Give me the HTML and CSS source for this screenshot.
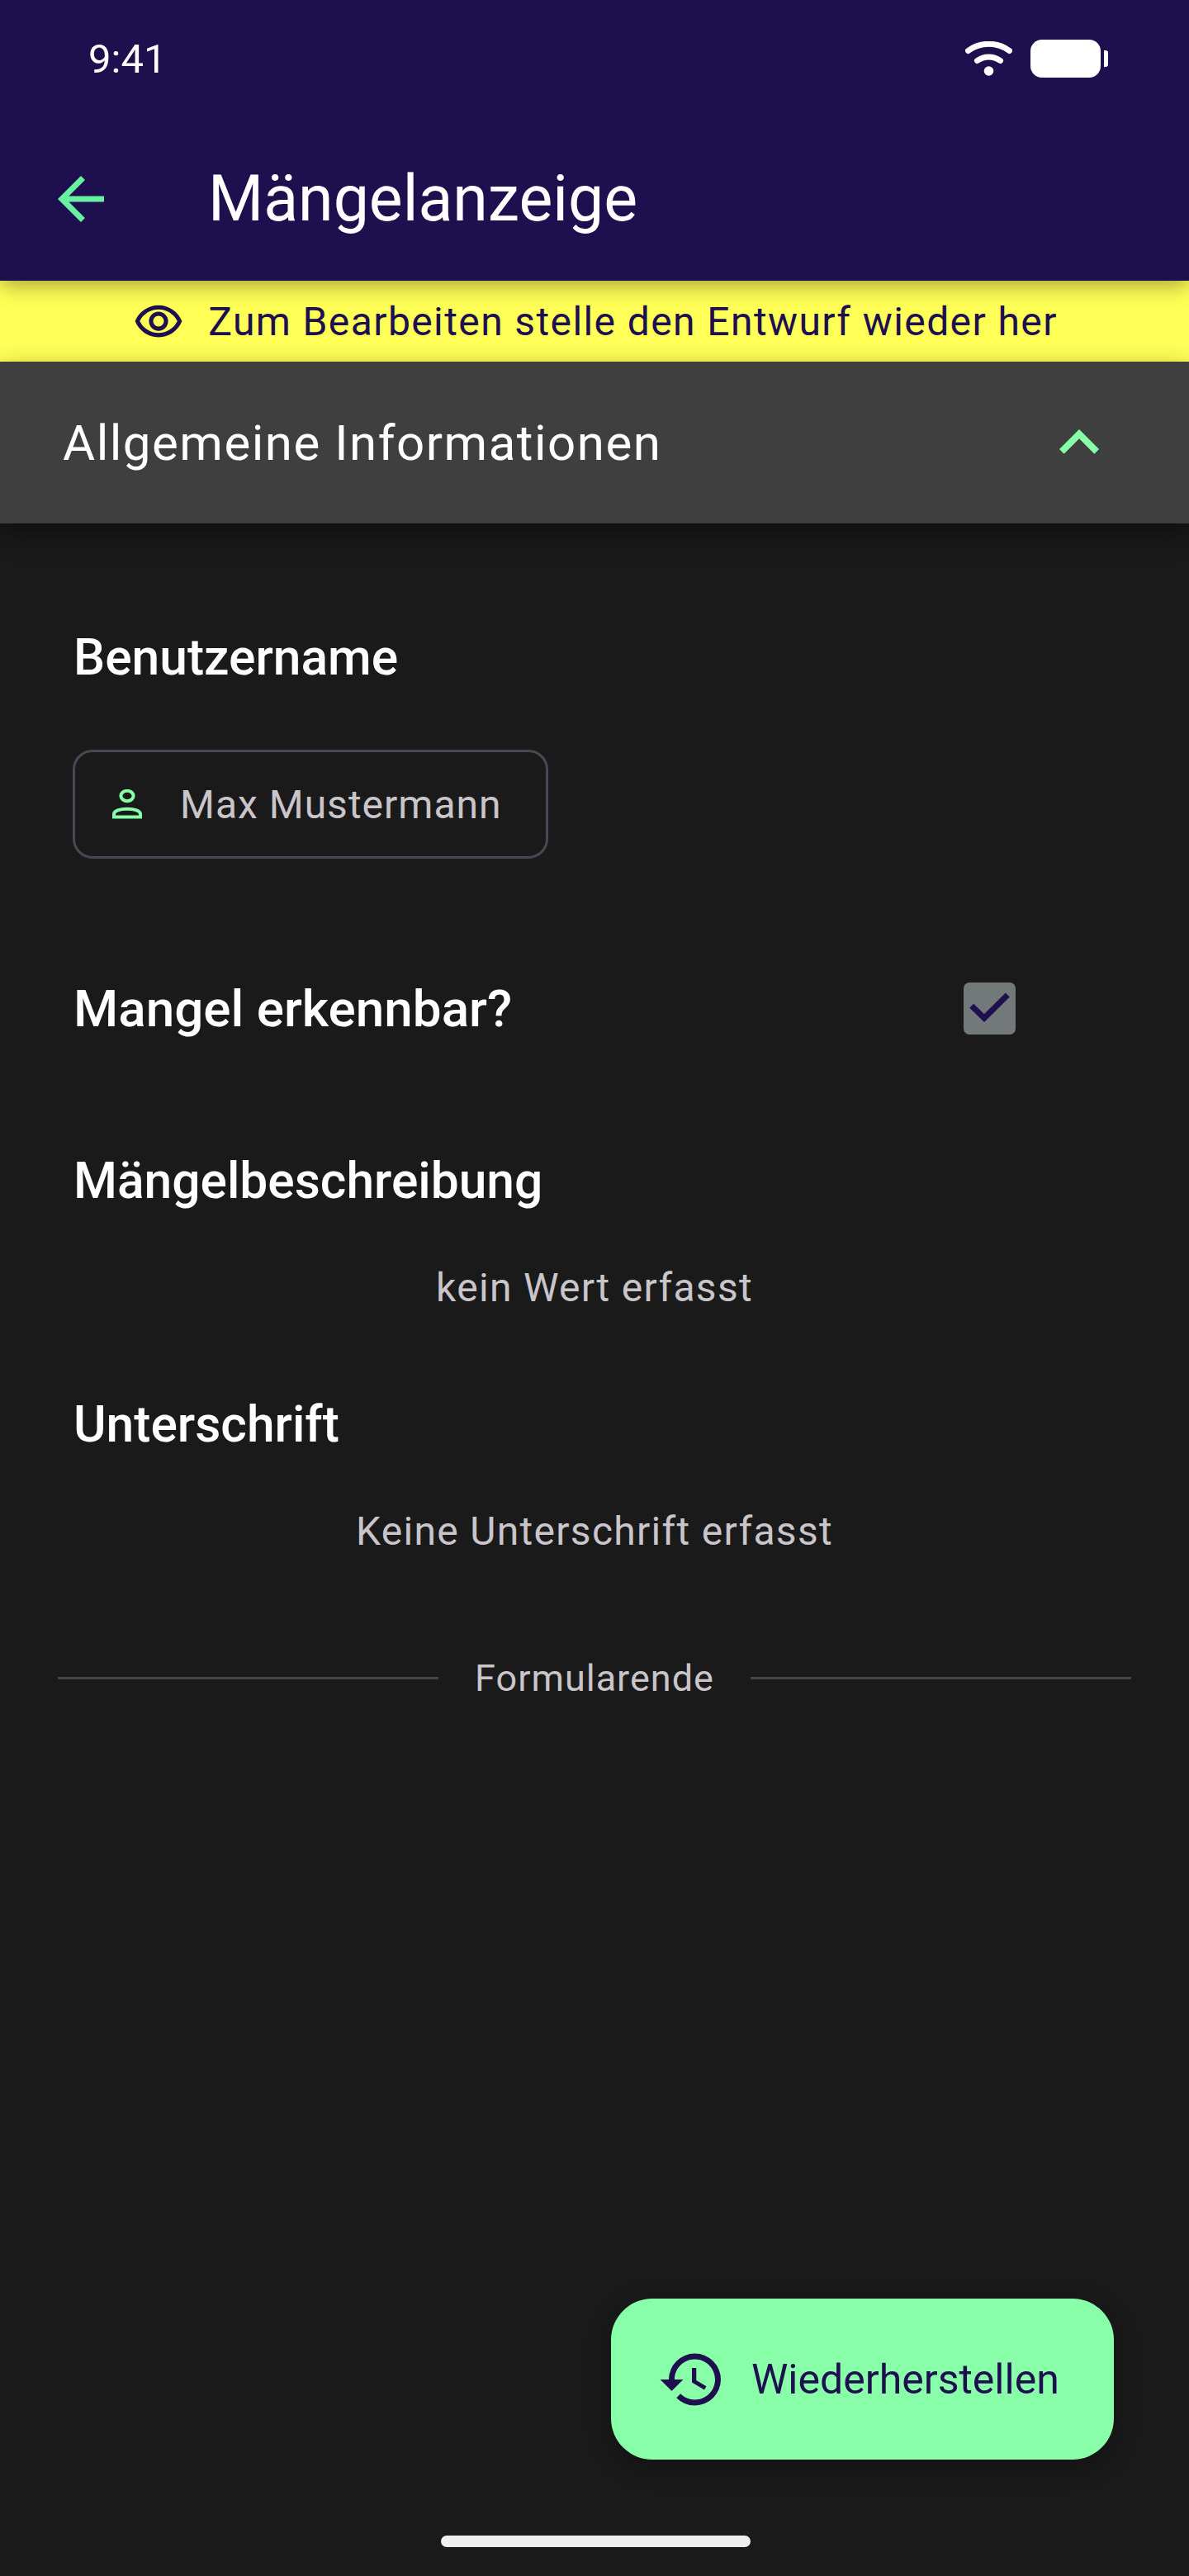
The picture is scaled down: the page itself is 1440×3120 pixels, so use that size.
FILE: index.html
```html
<!DOCTYPE html>
<html lang="de">
<head>
    <meta charset="UTF-8">
    <meta name="viewport" content="width=device-width, initial-scale=1.0">
    <title>Mängelanzeige</title>
    <link rel="stylesheet" href="styles.css">
</head>
<body>
    <div class="screen">
        <header class="topbar">
            <div class="status">
                <span class="status__time">9:41</span>
                <div class="status__icons">
                    <svg class="status__wifi" viewBox="0 0 57 42" width="57" height="42">
                        <path d="M3.5 11.5C18 0.5 39 0.5 53.5 11.5" fill="none" stroke="#fff" stroke-width="7" stroke-linecap="round"/>
                        <path d="M14.5 23.5C23 17.5 34 17.5 42.5 23.5" fill="none" stroke="#fff" stroke-width="7" stroke-linecap="round"/>
                        <circle cx="28.5" cy="36" r="5.8" fill="#fff"/>
                    </svg>
                    <div class="battery"><div class="battery__body"></div><div class="battery__tip"></div></div>
                </div>
            </div>
            <div class="appbar">
                <svg class="appbar__back" viewBox="0 0 24 24" width="84" height="84"><path d="M20 11H7.83l5.59-5.59L12 4l-8 8 8 8 1.41-1.41L7.83 13H20v-2z"/></svg>
                <h1 class="appbar__title">Mängelanzeige</h1>
            </div>
        </header>

        <div class="notice">
            <svg class="notice__eye" viewBox="0 0 24 24" width="62" height="62"><path d="M12 6.5c3.79 0 7.17 2.13 8.82 5.5-1.65 3.37-5.02 5.5-8.82 5.5S4.83 15.37 3.18 12C4.83 8.63 8.21 6.5 12 6.5m0-2C7 4.5 2.73 7.61 1 12c1.73 4.39 6 7.5 11 7.5s9.27-3.11 11-7.5c-1.73-4.39-6-7.5-11-7.5zm0 5c1.38 0 2.5 1.12 2.5 2.5s-1.12 2.5-2.5 2.5-2.5-1.12-2.5-2.5 1.12-2.5 2.5-2.5m0-2c-2.48 0-4.5 2.02-4.5 4.5s2.02 4.5 4.5 4.5 4.5-2.02 4.5-4.5-2.02-4.5-4.5-4.5z"/></svg>
            <p class="notice__text">Zum Bearbeiten stelle den Entwurf wieder her</p>
        </div>

        <div class="group">
            <h2 class="group__title">Allgemeine Informationen</h2>
            <svg class="group__chevron" viewBox="0 0 24 24" width="96" height="96"><path d="M12 8l-6 6 1.41 1.41L12 10.83l4.59 4.58L18 14z"/></svg>
        </div>

        <main class="form">
            <section class="field field_user">
                <h3 class="field__label">Benutzername</h3>
                <div class="chip">
                    <svg class="chip__icon" viewBox="0 0 36 36" width="36" height="36">
                        <ellipse cx="18" cy="8" rx="7.6" ry="6.2"/>
                        <path d="M2 33.5V30C2 26 9 23.8 18 23.8S34 26 34 30V33.5Z"/>
                    </svg>
                    <span class="chip__text">Max Mustermann</span>
                </div>
            </section>

            <section class="field field_check">
                <h3 class="field__label field__label_large">Mangel erkennbar?</h3>
                <div class="checkbox">
                    <svg viewBox="0 0 63 63" width="63" height="63"><path d="M9.7 28.3L25 43L53.3 15" fill="none" stroke="#1e0f4f" stroke-width="7"/></svg>
                </div>
            </section>

            <section class="field field_desc">
                <h3 class="field__label">Mängelbeschreibung</h3>
                <p class="field__empty">kein Wert erfasst</p>
            </section>

            <section class="field field_sign">
                <h3 class="field__label">Unterschrift</h3>
                <p class="field__empty">Keine Unterschrift erfasst</p>
            </section>

            <div class="form-end">
                <span class="form-end__line"></span>
                <span class="form-end__text">Formularende</span>
                <span class="form-end__line"></span>
            </div>
        </main>

        <button class="fab" type="button">
            <svg class="fab__icon" viewBox="0 0 24 24" width="84" height="84"><path d="M13 3a9 9 0 0 0-9 9H1l3.89 3.89.07.14L9 12H6c0-3.87 3.13-7 7-7s7 3.13 7 7-3.13 7-7 7c-1.93 0-3.68-.79-4.94-2.06l-1.42 1.42A8.954 8.954 0 0 0 13 21a9 9 0 0 0 0-18zm-1 5v5l4.28 2.54.72-1.21-3.5-2.08V8H12z"/></svg>
            <span class="fab__text">Wiederherstellen</span>
        </button>

        <div class="home-bar"></div>
    </div>
</body>
</html>
```

FILE: styles.css
```css
* {
    box-sizing: border-box;
}

body {
    margin: 0;
    font-family: Roboto, sans-serif;
    font-weight: 400;
    color: #ffffff;
    background-color: #1a1a1a;
}

h1, h2, h3, p {
    margin: 0;
    font-weight: 400;
}

svg {
    display: block;
    flex-shrink: 0;
}

.screen {
    position: relative;
    width: 1440px;
    height: 3120px;
    overflow: hidden;
    background-color: #1a1a1a;
}

.topbar {
    position: relative;
    z-index: 3;
    height: 340px;
    background-color: #1e0f4f;
    box-shadow: 0 6px 24px rgba(0, 0, 0, 0.35);
}

.status {
    display: flex;
    align-items: center;
    justify-content: space-between;
    height: 142px;
    padding: 0 98px 0 107px;
}

.status__time {
    font-size: 49px;
}

.status__icons {
    display: flex;
    align-items: center;
    gap: 22px;
}

.battery {
    display: flex;
    align-items: center;
    gap: 4px;
}

.battery__body {
    width: 85px;
    height: 46px;
    border-radius: 14px;
    background-color: #ffffff;
}

.battery__tip {
    width: 5px;
    height: 20px;
    border-radius: 0 3px 3px 0;
    background-color: #ffffff;
}

.appbar {
    display: flex;
    align-items: center;
    height: 198px;
    padding-left: 56px;
    gap: 112px;
}

.appbar__back {
    fill: #66f2a0;
}

.appbar__title {
    font-size: 77px;
    color: #ffffff;
}

.notice {
    display: flex;
    align-items: center;
    justify-content: center;
    gap: 29px;
    height: 98px;
    padding-left: 2px;
    background-color: #ffff57;
    color: #1e0f4f;
}

.notice__eye {
    fill: #1e0f4f;
}

.notice__text {
    font-size: 48px;
    letter-spacing: 1.4px;
}

.group {
    position: relative;
    z-index: 2;
    display: flex;
    align-items: center;
    justify-content: space-between;
    height: 196px;
    padding: 0 85px 0 76px;
    background-color: #3f3f3f;
    box-shadow: 0 12px 30px rgba(0, 0, 0, 0.45);
}

.group__title {
    font-size: 60px;
    letter-spacing: 1.5px;
}

.group__chevron {
    fill: #86ffa8;
}

.form {
    padding: 0 70px;
}

.field__label {
    font-size: 60.5px;
    font-weight: 500;
    padding-left: 19px;
}

.field__label_large {
    font-size: 62px;
}

.field__empty {
    margin-top: 65px;
    font-size: 48px;
    letter-spacing: 1.3px;
    text-align: center;
    color: #c9c5ca;
}

.field_user {
    padding-top: 127px;
}

.chip {
    display: flex;
    align-items: center;
    width: 576px;
    height: 132px;
    margin: 76px 0 0 18px;
    padding-left: 45px;
    gap: 46px;
    border: 3px solid #4a4754;
    border-radius: 24px;
}

.chip__icon {
    fill: none;
    stroke: #86ffa8;
    stroke-width: 4;
}

.chip__text {
    font-size: 48px;
    letter-spacing: 1px;
    color: #c9c5ca;
}

.field_check {
    display: flex;
    align-items: center;
    justify-content: space-between;
    height: 63px;
    margin-top: 150px;
    padding-right: 140px;
}

.checkbox {
    width: 63px;
    height: 63px;
    border-radius: 7px;
    background-color: #737878;
}

.field_desc {
    margin-top: 142px;
}

.field_sign {
    margin-top: 102px;
}

.form-end {
    display: flex;
    align-items: center;
    gap: 44px;
    margin-top: 123px;
}

.form-end__line {
    flex: 1;
    height: 3px;
    background-color: #45434e;
}

.form-end__text {
    font-size: 45px;
    letter-spacing: 1px;
    color: #c9c5ca;
}

.fab {
    position: absolute;
    right: 91px;
    bottom: 141px;
    display: flex;
    align-items: center;
    width: 609px;
    height: 195px;
    padding: 0 0 0 56px;
    gap: 30px;
    border: 0;
    border-radius: 50px;
    font-family: inherit;
    background-color: #88ffa8;
    box-shadow: 0 8px 30px rgba(0, 0, 0, 0.3);
}

.fab__icon {
    fill: #1e0f4f;
}

.fab__text {
    font-size: 50px;
    color: #1e0f4f;
}

.home-bar {
    position: absolute;
    left: 534px;
    bottom: 35px;
    width: 375px;
    height: 14px;
    border-radius: 7px;
    background-color: #eeeeee;
}
```
